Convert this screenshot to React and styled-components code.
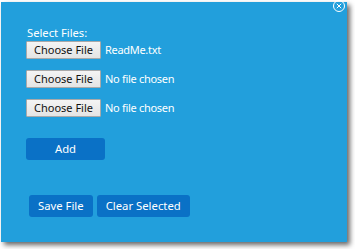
import React from "react";
import styled, { createGlobalStyle } from "styled-components";

const Global = createGlobalStyle`
  html, body { margin: 0; padding: 0; background: #ffffff; }
  body { font-family: "Noto Sans", "Open Sans", sans-serif; overflow: hidden; }
`;

const Page = styled.div`
  width: 355px;
  height: 249px;
  padding: 2px 0 0 1px;
  box-sizing: border-box;
`;

const Panel = styled.div`
  position: relative;
  width: 346px;
  height: 240px;
  box-sizing: border-box;
  background: #229fdc;
  box-shadow: 3px 3px 5px rgba(0, 0, 0, 0.6);
  padding: 23px 0 0 25px;
  display: flex;
  flex-direction: column;
  color: #ffffff;
`;

const Close = styled.svg`
  position: absolute;
  top: -3px;
  right: -1px;
`;

const Label = styled.div`
  font-size: 11.2px;
  line-height: 16px;
  padding-left: 1px;
`;

const Rows = styled.div`
  display: flex;
  flex-direction: column;
  gap: 11px;
`;

const Row = styled.div`
  display: flex;
  align-items: center;
  gap: 4px;
`;

const ChooseButton = styled.button`
  width: 75px;
  height: 18px;
  box-sizing: border-box;
  padding: 0;
  border: 1px solid #a9a9a9;
  border-radius: 1px;
  background: linear-gradient(#f4f4f4, #e4e4e4);
  color: #111;
  font-family: inherit;
  font-size: 11px;
  line-height: 16px;
`;

const FileName = styled.span`
  font-size: 11px;
  line-height: 16px;
  letter-spacing: -0.3px;
`;

const BlueButton = styled.button`
  height: 22px;
  box-sizing: border-box;
  border: none;
  border-radius: 3px;
  background: #0a71c6;
  color: #ffffff;
  font-family: inherit;
  font-size: 11.3px;
  padding: 0 ${(p) => p.$pad || 9}px;
  width: ${(p) => (p.$w ? `${p.$w}px` : "auto")};
`;

const AddWrap = styled.div`
  margin-top: 19px;
`;

const Footer = styled.div`
  display: flex;
  gap: 4px;
  margin-top: 35px;
  margin-left: 3px;
`;

export default function App() {
  return (
    <>
      <Global />
      <Page>
        <Panel>
          <Close width="16" height="16" viewBox="0 0 16 16">
            <circle cx="7" cy="7" r="5.5" fill="none" stroke="#ffffff" strokeWidth="1" />
            <path d="M4.8 4.8 L9.2 9.2 M9.2 4.8 L4.8 9.2" stroke="#ffffff" strokeWidth="1" />
          </Close>
          <Label>Select Files:</Label>
          <Rows>
            <Row>
              <ChooseButton>Choose File</ChooseButton>
              <FileName>ReadMe.txt</FileName>
            </Row>
            <Row>
              <ChooseButton>Choose File</ChooseButton>
              <FileName>No file chosen</FileName>
            </Row>
            <Row>
              <ChooseButton>Choose File</ChooseButton>
              <FileName>No file chosen</FileName>
            </Row>
          </Rows>
          <AddWrap>
            <BlueButton $w={79}>Add</BlueButton>
          </AddWrap>
          <Footer>
            <BlueButton>Save File</BlueButton>
            <BlueButton>Clear Selected</BlueButton>
          </Footer>
        </Panel>
      </Page>
    </>
  );
}
